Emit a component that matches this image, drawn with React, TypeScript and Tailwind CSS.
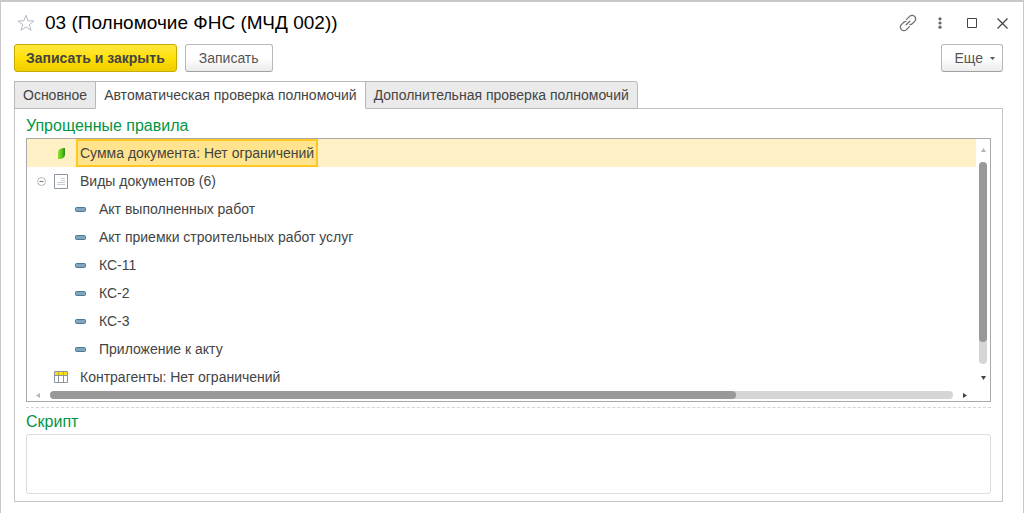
import React, { useState } from "react";
import clsx from "clsx";

const tabs = [
  "Основное",
  "Автоматическая проверка полномочий",
  "Дополнительная проверка полномочий",
];

const documentKinds = [
  "Акт выполненных работ",
  "Акт приемки строительных работ услуг",
  "КС-11",
  "КС-2",
  "КС-3",
  "Приложение к акту",
];

const StarIcon = () => (
  <svg width="18" height="18" viewBox="0 0 18 18" fill="none" stroke="#b4bac0">
    <path d="M9 1.3 11 6.8 17 7 12.3 10.6 14 16.3 9 13 4 16.3 5.7 10.6 1 7 7 6.8Z" />
  </svg>
);

const LinkIcon = () => (
  <svg width="18" height="18" viewBox="0 0 18 18" fill="none" stroke="#707070" strokeWidth="1.3" strokeLinecap="round">
    <path d="M7.600 5.400 10.600 2.400a3.500 3.500 0 0 1 5 0 3.500 3.500 0 0 1 0 5L13.200 9.800a3.200 3.200 0 0 1-2.200.9" />
    <path d="M10.400 12.600 7.400 15.600a3.500 3.500 0 0 1-5 0 3.500 3.500 0 0 1 0-5L4.800 8.200A3.200 3.200 0 0 1 7 7.300" />
    <path d="M7.200 10.800 10.800 7.200" />
  </svg>
);

const DotsIcon = () => (
  <svg width="4" height="12" viewBox="0 0 4 12" fill="#666">
    <circle cx="2" cy="1.8" r="1.6" />
    <circle cx="2" cy="6" r="1.6" />
    <circle cx="2" cy="10.2" r="1.6" />
  </svg>
);

const MaximizeIcon = () => (
  <svg width="10" height="10" viewBox="0 0 10 10" fill="none" stroke="#444">
    <path d="M.5.5h9v9h-9z" />
  </svg>
);

const CloseIcon = () => (
  <svg width="11" height="11" viewBox="0 0 11 11" fill="none" stroke="#444" strokeWidth="1.2">
    <path d="M.5.5l10 10M10.5.5l-10 10" />
  </svg>
);

const CollapseIcon = () => (
  <svg width="9" height="9" viewBox="0 0 9 9" fill="none" stroke="#b4b4b4">
    <circle cx="4.5" cy="4.5" r="4" />
    <path d="M2.5 4.5h4" stroke="#777" />
  </svg>
);

const LeafIcon = () => (
  <svg width="14" height="14" viewBox="0 0 14 14">
    <defs>
      <linearGradient id="leaf" x1="0" y1="0" x2="1" y2="0">
        <stop offset="0" stopColor="#8ce02c" />
        <stop offset=".55" stopColor="#5cc41c" />
        <stop offset="1" stopColor="#2b8c12" />
      </linearGradient>
    </defs>
    <path d="M4 6.500C4 3.500 6.500 2 11 2V8.500C11 11 9 13 4 13Z" fill="url(#leaf)" />
  </svg>
);

const DocumentIcon = () => (
  <svg width="14" height="15" viewBox="0 0 14 15">
    <path d="M.5.5h13v14H.5z" fill="#fff" stroke="#8f94a3" />
    <path d="M7 4.500h4M7 6.500h4M3 8.500h8M3 10.500h8" stroke="#c3ced8" />
  </svg>
);

const TableIcon = () => (
  <svg width="14" height="12" viewBox="0 0 14 12">
    <path d="M.5.500h13v11H.5z" fill="#fff" stroke="#8b959d" />
    <path d="M.5 4.500h13M4.500 4v7.500M9.500 4v7.500" stroke="#8b959d" />
    <path d="M1 1h12v3H1z" fill="#ffdc14" />
    <path d="M4.500 1v3M9.500 1v3" stroke="#c4aa2a" />
  </svg>
);

const DashIcon = () => (
  <svg width="11" height="5" viewBox="0 0 11 5">
    <rect x=".5" y=".5" width="10" height="4" rx="1" fill="#7fa6bd" stroke="#4c7896" />
  </svg>
);

const Arrow = ({ d, color }: { d: string; color: string }) => (
  <svg width="5" height="5" viewBox="0 0 5 5" fill={color}>
    <path d={d} />
  </svg>
);

const plainButton =
  "h-7 rounded-[3px] border border-[#b8b8b8] border-b-[#a0a0a0] bg-linear-to-b from-white from-50% to-[#ececec] text-sm text-[#555]";

const App = () => {
  const [activeTab, setActiveTab] = useState(1);
  const [expanded, setExpanded] = useState(true);

  return (
    <div className="min-h-screen border-x border-t-2 border-[#c8c8c8] bg-white pl-px font-['Liberation_Sans',Arial,sans-serif] text-sm text-[#444]">
      {/* Title bar */}
      <header className="flex h-[42px] items-center pr-[15px] pl-[15px]">
        <button aria-label="Добавить в избранное">
          <StarIcon />
        </button>
        <h1 className="ml-[10px] flex-1 text-[19px] text-black">
          03 (Полномочие ФНС (МЧД 002))
        </h1>
        <div className="flex items-center">
          <button aria-label="Ссылка" className="mr-[21px]"><LinkIcon /></button>
          <button aria-label="Меню" className="mr-[25px]"><DotsIcon /></button>
          <button aria-label="Развернуть" className="mr-5"><MaximizeIcon /></button>
          <button aria-label="Закрыть"><CloseIcon /></button>
        </div>
      </header>

      <main className="pr-5 pb-3 pl-3">
        {/* Commands */}
        <div className="flex gap-2">
          <button className="h-7 rounded-[3px] border border-[#c9ab00] bg-linear-to-b from-[#ffe83a] via-[#ffe000] to-[#efcd00] px-[11px] text-sm font-bold text-[#444]">
            Записать и закрыть
          </button>
          <button className={clsx(plainButton, "px-[13px]")}>Записать</button>
          <button className={clsx(plainButton, "ml-auto flex items-center gap-[7px] pr-[7px] pl-[13px]")}>
            Еще
            <Arrow d="M0 1h5L2.500 4z" color="#555" />
          </button>
        </div>

        {/* Tabs */}
        <div role="tablist" className="mt-[9px] flex">
          {tabs.map((label, i) => (
            <button
              key={label}
              role="tab"
              aria-selected={activeTab === i}
              onClick={() => setActiveTab(i)}
              className={clsx(
                "relative -mb-px h-7 border border-[#b8b8b8] px-2 text-sm",
                i > 0 && "-ml-px",
                i === tabs.length - 1 && "rounded-tr-[3px]",
                activeTab === i ? "z-10 border-b-white bg-white" : "bg-[#eaeaea]"
              )}
            >
              {label}
            </button>
          ))}
        </div>

        <section className="border border-[#c4c4c4] px-[11px] pb-[7px]">
          <h2 className="pt-[5px] text-base leading-6 text-[#009646]">Упрощенные правила</h2>

          {/* Rules tree */}
          <div className="border border-[#a8a8a8]">
            <div className="flex">
              <ul className="flex-1 leading-7">
                <li className="flex h-7 items-center bg-[#fff1c5] pl-[27px]">
                  <LeafIcon />
                  <span className="ml-2 h-7 border-2 border-[#fdc820] bg-[#ffe48d] px-[2px] leading-6">
                    Сумма документа: Нет ограничений
                  </span>
                </li>
                <li>
                  <div className="flex h-7 items-center pl-[10px]">
                    <button aria-label="Свернуть" onClick={() => setExpanded(!expanded)}>
                      <CollapseIcon />
                    </button>
                    <span className="mr-3 ml-2"><DocumentIcon /></span>
                    Виды документов (6)
                  </div>
                  {expanded && (
                    <ul>
                      {documentKinds.map((kind) => (
                        <li key={kind} className="flex h-7 items-center gap-[13px] pl-12">
                          <DashIcon />
                          {kind}
                        </li>
                      ))}
                    </ul>
                  )}
                </li>
                <li className="flex h-7 items-center gap-3 pl-[27px]">
                  <TableIcon />
                  Контрагенты: Нет ограничений
                </li>
              </ul>

              <div className="flex w-[14px] flex-col items-center">
                <div className="flex h-[23px] items-center"><Arrow d="M0 4h5L2.500 0z" color="#b5b5b5" /></div>
                <div className="w-2 flex-1 rounded-full bg-[#d5d5d5]">
                  <div className="h-[89%] rounded-full bg-[#999]" />
                </div>
                <div className="flex h-[27px] items-center"><Arrow d="M0 1h5L2.500 5z" color="#444" /></div>
              </div>
            </div>

            <div className="flex h-[10px] items-start pr-[14px]">
              <div className="flex h-2 w-[23px] items-center justify-center"><Arrow d="M4 0v5L0 2.500z" color="#b5b5b5" /></div>
              <div className="h-2 flex-1 rounded-full bg-[#d5d5d5]">
                <div className="h-2 w-[76%] rounded-full bg-[#999]" />
              </div>
              <div className="flex h-2 w-[23px] items-center justify-center"><Arrow d="M1 0v5L5 2.500z" color="#444" /></div>
            </div>
          </div>

          <div className="mt-[5px] border-t border-dashed border-[#d4d4d4]" />

          <label htmlFor="script" className="block pt-[2px] text-base leading-6 text-[#009646]">
            Скрипт
          </label>
          <textarea
            id="script"
            className="block h-[60px] w-full resize-none rounded-[3px] border border-[#dcdcdc] p-1 outline-none"
          />
        </section>
      </main>
    </div>
  );
};

export default App;
